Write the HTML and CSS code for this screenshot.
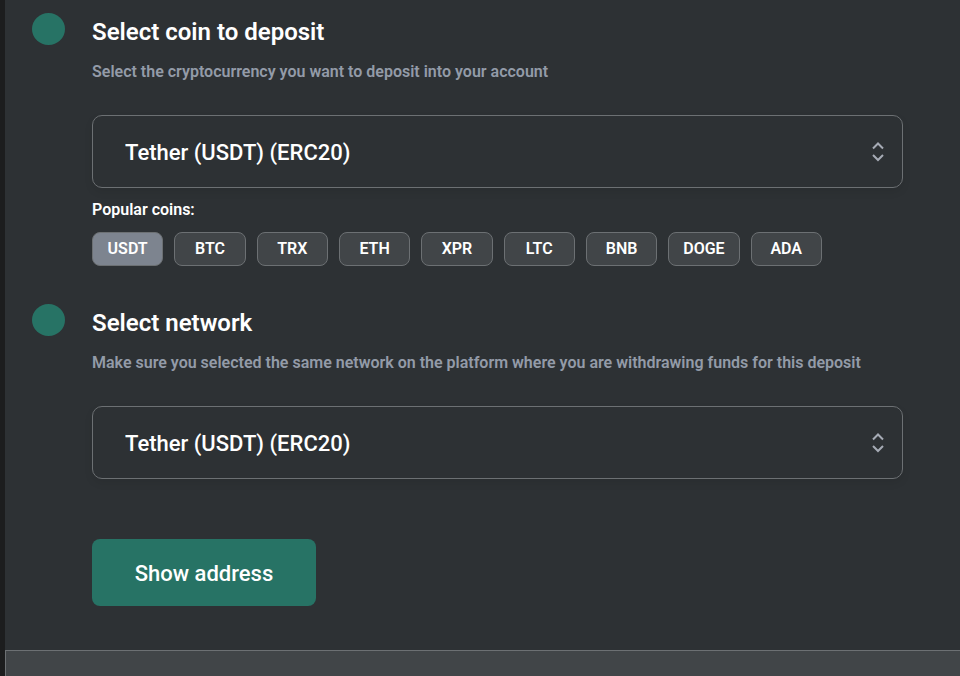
FILE: index.html
```html
<!DOCTYPE html>
<html lang="en">
<head>
  <meta charset="utf-8">
  <meta name="viewport" content="width=device-width, initial-scale=1">
  <title>Deposit</title>
  <link rel="stylesheet" href="styles.css">
</head>
<body>
  <main class="panel">
    <form class="steps">
      <section class="step">
        <span class="marker"></span>
        <div class="step-body">
          <h2 class="title"><label for="coin">Select coin to deposit</label></h2>
          <p class="hint">Select the cryptocurrency you want to deposit into your account</p>
          <div class="field">
            <select id="coin" class="select">
              <option>Tether (USDT) (ERC20)</option>
            </select>
            <svg class="chevrons" viewBox="0 0 12 20" aria-hidden="true"><path d="M1 6.5 6 1.5 11 6.5M1 13 6 18 11 13"/></svg>
          </div>
          <p class="popular">Popular coins:</p>
          <div class="chips">
            <button type="button" class="chip chip-active">USDT</button>
            <button type="button" class="chip">BTC</button>
            <button type="button" class="chip">TRX</button>
            <button type="button" class="chip">ETH</button>
            <button type="button" class="chip">XPR</button>
            <button type="button" class="chip">LTC</button>
            <button type="button" class="chip">BNB</button>
            <button type="button" class="chip">DOGE</button>
            <button type="button" class="chip">ADA</button>
          </div>
        </div>
      </section>
      <section class="step">
        <span class="marker"></span>
        <div class="step-body">
          <h2 class="title"><label for="network">Select network</label></h2>
          <p class="hint">Make sure you selected the same network on the platform where you are withdrawing funds for this deposit</p>
          <div class="field">
            <select id="network" class="select">
              <option>Tether (USDT) (ERC20)</option>
            </select>
            <svg class="chevrons" viewBox="0 0 12 20" aria-hidden="true"><path d="M1 6.5 6 1.5 11 6.5M1 13 6 18 11 13"/></svg>
          </div>
          <button type="button" class="submit">Show address</button>
        </div>
      </section>
    </form>
    <div class="next-card"></div>
  </main>
</body>
</html>
```

FILE: styles.css
```css
* {
  box-sizing: border-box;
}

body {
  margin: 0;
  background: #1c1d1e;
  color: #fff;
  font-family: Roboto, "Liberation Sans", sans-serif;
  font-weight: 600;
}

.panel {
  display: flex;
  flex-direction: column;
  min-height: 100vh;
  margin-left: 5px;
  background: #2d3134;
}

.steps {
  display: flex;
  flex-direction: column;
  gap: 38px;
  padding: 13px 57px 44px 27px;
}

.step {
  display: grid;
  grid-template-columns: 33px 1fr;
  column-gap: 27px;
}

.marker {
  height: 32px;
  border-radius: 50%;
  background: #277365;
}

.title {
  margin: 0;
  padding-top: 4px;
  font-size: 24px;
  font-weight: 600;
  line-height: 30px;
}

.hint {
  margin: 13px 0 31px;
  color: #939ba8;
  font-size: 16px;
  line-height: 24px;
}

.field {
  display: grid;
  align-items: center;
}

.select,
.chevrons {
  grid-area: 1 / 1;
}

.select {
  width: 100%;
  height: 73px;
  padding: 2px 48px 0 32px;
  appearance: none;
  border: 1px solid #6c7073;
  border-radius: 10px;
  background: #2d3134;
  box-shadow: 0 4px 8px rgba(0, 0, 0, 0.08);
  color: #fff;
  font: inherit;
  font-size: 22px;
  font-weight: 500;
}

.chevrons {
  justify-self: end;
  width: 12px;
  height: 20px;
  margin-right: 19px;
  fill: none;
  stroke: #a6abb5;
  stroke-width: 2;
  pointer-events: none;
}

.popular {
  margin: 10px 0;
  font-size: 16px;
  line-height: 24px;
}

.chips {
  display: grid;
  grid-template-columns: repeat(9, minmax(0, 1fr));
  gap: 11px;
  width: 90%;
}

.chip {
  height: 34px;
  padding: 0 0 2px;
  border: 1px solid #6c7073;
  border-radius: 8px;
  background: #414548;
  color: #fff;
  font: inherit;
  font-size: 16px;
}

.chip-active {
  background: #7d848f;
}

.submit {
  width: 224px;
  height: 67px;
  margin-top: 60px;
  padding: 2px 0 0;
  border: 0;
  border-radius: 8px;
  background: #277365;
  color: #fff;
  font: inherit;
  font-size: 22px;
  font-weight: 500;
}

.next-card {
  flex: 1;
  border: solid #6c7073;
  border-width: 1px 0 0 1px;
  background: #414548;
}
```
